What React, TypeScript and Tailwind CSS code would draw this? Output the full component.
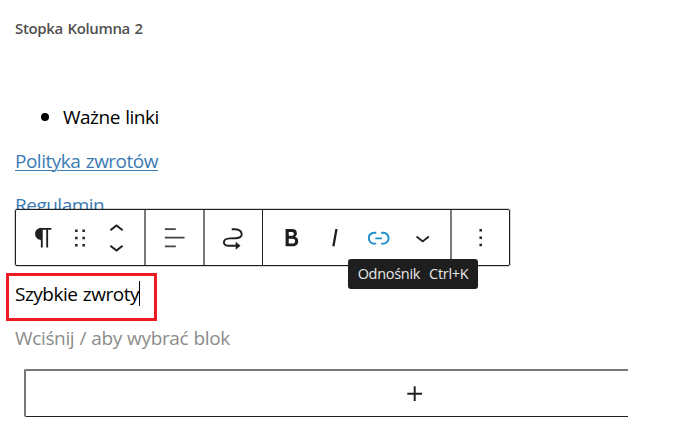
export default function App() {
  return (
    <main className="relative h-[430px] w-[700px] overflow-hidden bg-white pl-[15px] font-['Open_Sans','Noto_Sans',sans-serif] text-[19px] leading-[44px] whitespace-nowrap text-black">
      <h2 className="h-[95px] pt-[18px] text-[15px] leading-5 font-semibold tracking-[-0.35px] [word-spacing:1px] text-[#505050]">
        Stopka Kolumna 2
      </h2>

      <ul className="h-11 pl-[26px]">
        <li className="flex items-center gap-[14px]">
          <span className="-mt-[1px] size-2 rounded-full bg-black" />
          <span className="tracking-[-0.5px] [word-spacing:1px]">Ważne linki</span>
        </li>
      </ul>
      <p className="h-11">
        <a className="tracking-[-0.5px] [word-spacing:1px] text-[#3b7bb3] underline decoration-1 underline-offset-2">
          Polityka zwrotów
        </a>
      </p>
      <p className="h-11">
        <a className="tracking-[-0.5px] text-[#3b7bb3] underline decoration-1 underline-offset-2">
          Regulamin
        </a>
      </p>

      <div className="flex h-[89px] items-end">
        <p className="flex h-11 items-center">
          <span className="tracking-[-0.5px] [word-spacing:1px]">Szybkie zwroty</span>
          <span className="-mt-[2px] h-[25px] w-px bg-black" />
        </p>
      </div>
      <p className="h-[53px] tracking-[-0.35px] [word-spacing:0.6px] text-[#8c8c8c]">
        Wciśnij / aby wybrać blok
      </p>

      <button className="ml-[9px] flex h-[48px] w-[604px] items-center justify-center rounded-l-[2px] border-t-2 border-b border-l-2 border-t-[#777] border-b-[#1e1e1e] border-l-[#777] pl-[175px] text-[#1e1e1e]">
        <Icon d="M18 11.2h-5.2V6h-1.6v5.2H6v1.6h5.2V18h1.6v-5.2H18z" />
      </button>

      <Toolbar />

      <div className="absolute top-[273px] left-[6px] h-[48px] w-[151px] border-[3px] border-[#ed1c24]" />

      <div className="absolute top-[259px] left-[348px] flex h-[30px] w-[130px] items-center justify-center gap-[9px] rounded-[3px] bg-[#1e1e1e] text-[14.5px] leading-5 text-[#e8e8e8]">
        <span className="tracking-[-0.3px]">Odnośnik</span>
        <span className="tracking-[-0.3px]">Ctrl+K</span>
      </div>
    </main>
  );
}

function Toolbar() {
  return (
    <div className="absolute top-[209px] left-[15px] flex h-[57px] w-[495px] rounded-[2px] border border-[#1e1e1e] bg-white text-[#1e1e1e] shadow-[0_0_0_1px_#0000002a]">
      <div className="flex w-[130px] items-center border-r-2 border-[#7a7a7a] pl-[13px]">
        <Icon d="M18.3 4H9.9v-.1l-.9.2c-2.3.4-4 2.4-4 4.8s1.7 4.4 4 4.8l.7.1V20h1.5V5.5h2.9V20h1.5V5.5h2.7V4z" />
        <svg viewBox="0 0 18 18" className="ml-[10.5px] size-[22px] shrink-0" fill="currentColor">
          <path d="M5 4h2V2H5v2zm6-2v2h2V2h-2zm-6 8h2V8H5v2zm6 0h2V8h-2v2zm-6 6h2v-2H5v2zm6 0h2v-2h-2v2z" />
        </svg>
        <div className="ml-[18.5px] flex shrink-0 flex-col">
          <svg viewBox="6 7 12 9" className="mb-[8px] h-[11px] w-[15px]" fill="currentColor">
            <path d="M6.5 12.4L12 8l5.5 4.4-.9 1.2L12 10l-4.5 3.6-1-1.2z" />
          </svg>
          <svg viewBox="6 8 12 9" className="h-[11px] w-[15px]" fill="currentColor">
            <path d="M17.5 11.6L12 16l-5.5-4.4.9-1.2L12 14l4.5-3.6 1 1.2z" />
          </svg>
        </div>
      </div>
      <div className="flex w-[59px] items-center justify-center border-r-2 border-[#7a7a7a] text-[#444]">
        <Icon d="M4 19.8h8.9v-1.5H4v1.5zm8.9-15.6H4v1.5h8.9V4.2zm-8.9 7v1.5h16v-1.5H4z" />
      </div>
      <div className="flex w-[58px] items-center justify-center border-r border-[#1e1e1e]">
        <svg viewBox="0 0 24 24" className="mt-[1px] mr-[1px] size-6" fill="none">
          <path
            d="M10.7 3.2H14C22 3.7 23.5 12 15 12.2L9 12.4C1 12.8 1 19.8 8 19.8h8"
            stroke="currentColor"
            strokeWidth="1.9"
          />
          <path d="M14.7 15.8l4.8 4-4.8 3.9z" fill="currentColor" />
        </svg>
      </div>
      <div className="flex w-[189px] items-center border-r-2 border-[#7a7a7a] pl-[14px]">
        <Icon d="M14.7 11.3c1-.6 1.5-1.6 1.5-3 0-2.3-1.3-3.4-4-3.4H7v14h5.8c1.4 0 2.5-.3 3.3-1 .8-.7 1.2-1.7 1.2-2.9.1-1.9-.8-3.1-2.6-3.7zm-5.1-4h2.3c.6 0 1.1.1 1.4.4.3.3.5.7.5 1.2s-.2 1-.5 1.2c-.3.3-.8.4-1.4.4H9.6V7.3zm4.6 9c-.4.3-1 .4-1.7.4H9.6v-3.9h2.9c.7 0 1.3.2 1.7.5.4.3.6.8.6 1.5s-.2 1.2-.6 1.5z" />
        <span className="ml-[14px]">
          <Icon d="M12.5 5L10 19h1.9l2.5-14z" />
        </span>
        <span className="ml-[14px] text-[#1a8ccb]">
          <Icon d="M15.6 7.2H14v1.5h1.6c2 0 3.7 1.7 3.7 3.7s-1.7 3.7-3.7 3.7H14v1.5h1.6c2.8 0 5.2-2.3 5.2-5.2 0-2.9-2.3-5.2-5.2-5.2zM4.7 12.4c0-2 1.7-3.7 3.7-3.7H10V7.2H8.4c-2.9 0-5.2 2.3-5.2 5.2 0 2.9 2.3 5.2 5.2 5.2H10v-1.5H8.4c-2 0-3.7-1.7-3.7-3.7zm4.6.9h5.3v-1.5H9.3v1.5z" />
        </span>
        <span className="ml-[15px]">
          <Icon d="M17.5 11.6L12 16l-5.5-4.4.9-1.2L12 14l4.5-3.6 1 1.2z" />
        </span>
      </div>
      <div className="flex flex-1 items-center justify-center">
        <Icon d="M13 19h-2v-2h2v2zm0-6h-2v-2h2v2zm0-6h-2V5h2v2z" />
      </div>
    </div>
  );
}

function Icon({ d }: { d: string }) {
  return (
    <svg viewBox="0 0 24 24" className="size-[29.4px] shrink-0" fill="currentColor">
      <path d={d} />
    </svg>
  );
}
